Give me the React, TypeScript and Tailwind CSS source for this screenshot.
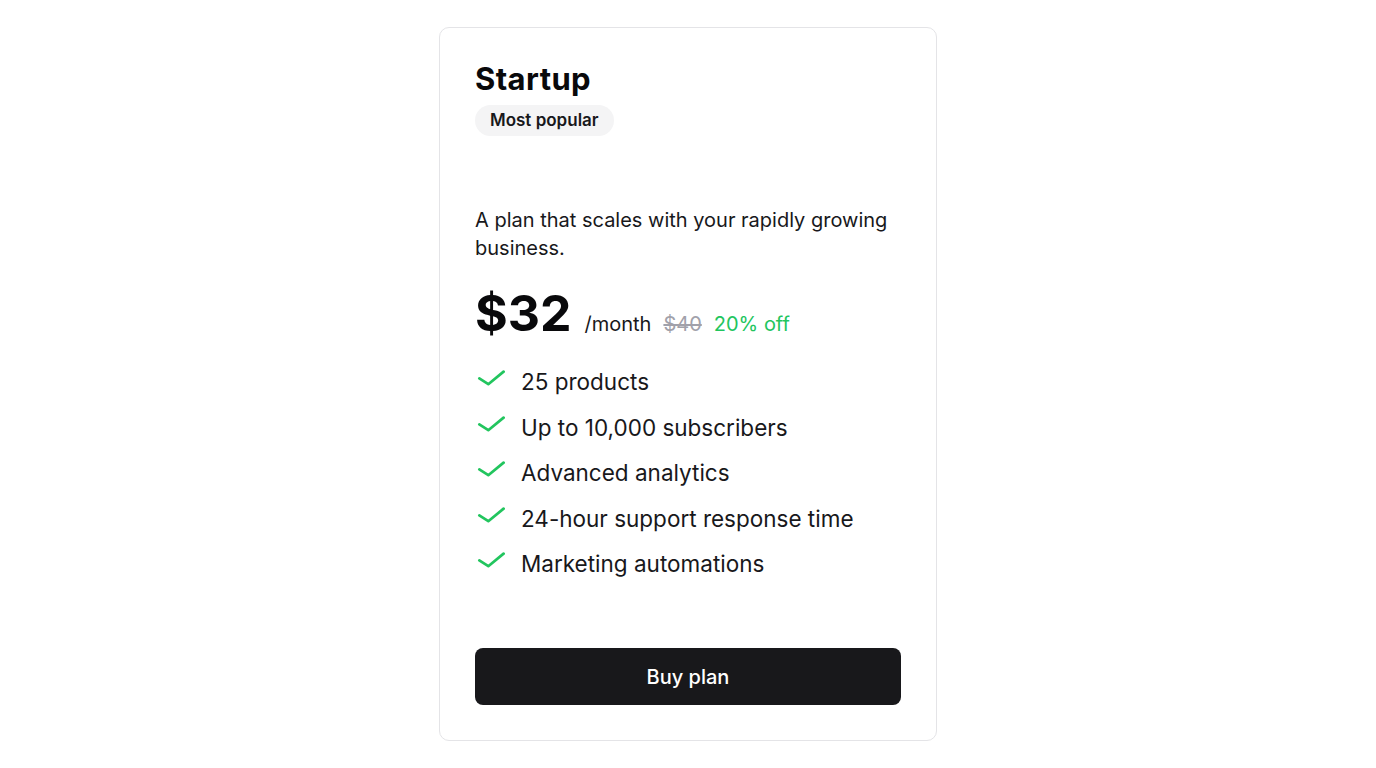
import React from "react";

const features = [
  "25 products",
  "Up to 10,000 subscribers",
  "Advanced analytics",
  "24-hour support response time",
  "Marketing automations",
];

function Check() {
  return (
    <svg width="30" height="30" viewBox="0 0 30 30" fill="none" className="shrink-0">
      <path d="M4.3 11.4 L13.3 17.2 L28.6 4.6" stroke="#22c55e" strokeWidth="2.7" strokeLinecap="round" strokeLinejoin="round" />
    </svg>
  );
}

export default function App() {
  return (
    <div className="min-h-screen w-full bg-white flex items-center justify-center" style={{ fontFamily: "Inter, 'Noto Sans', sans-serif" }}>
      <div className="w-[498px] h-[714px] border border-[#e4e4e7] rounded-[10px] p-[35px] flex flex-col text-[#18181b]">
        <h2 className="text-[31px] leading-[32px] font-bold tracking-[0.4px] text-[#09090b]">Startup</h2>
        <div className="mt-[10px]">
          <span className="inline-flex items-center h-[31px] px-[15px] rounded-full bg-[#f4f4f5] text-[17px] font-semibold text-[#18181b]">Most popular</span>
        </div>
        <p className="mt-[70px] text-[20px] leading-[28px] text-[#18181b]">A plan that scales with your rapidly growing business.</p>
        <div className="mt-[23px] h-[56px] flex items-baseline">
          <span className="text-[50px] leading-[56px] font-bold text-[#09090b]">$32</span>
          <span className="ml-[13px] text-[20px] text-[#18181b]">/month</span>
          <span className="ml-[12px] text-[20px] text-[#a1a1aa] line-through">$40</span>
          <span className="ml-[12px] text-[20px] text-[#22c55e]">20% off</span>
        </div>
        <ul className="mt-[26px] flex flex-col gap-[15.5px]">
          {features.map((f) => (
            <li key={f} className="flex items-center gap-[16px] text-[22.5px] leading-[30px] text-[#18181b]">
              <Check />
              <span>{f}</span>
            </li>
          ))}
        </ul>
        <button className="mt-auto h-[57px] w-full rounded-[8px] bg-[#18181b] text-white text-[20px] font-medium">Buy plan</button>
      </div>
    </div>
  );
}
